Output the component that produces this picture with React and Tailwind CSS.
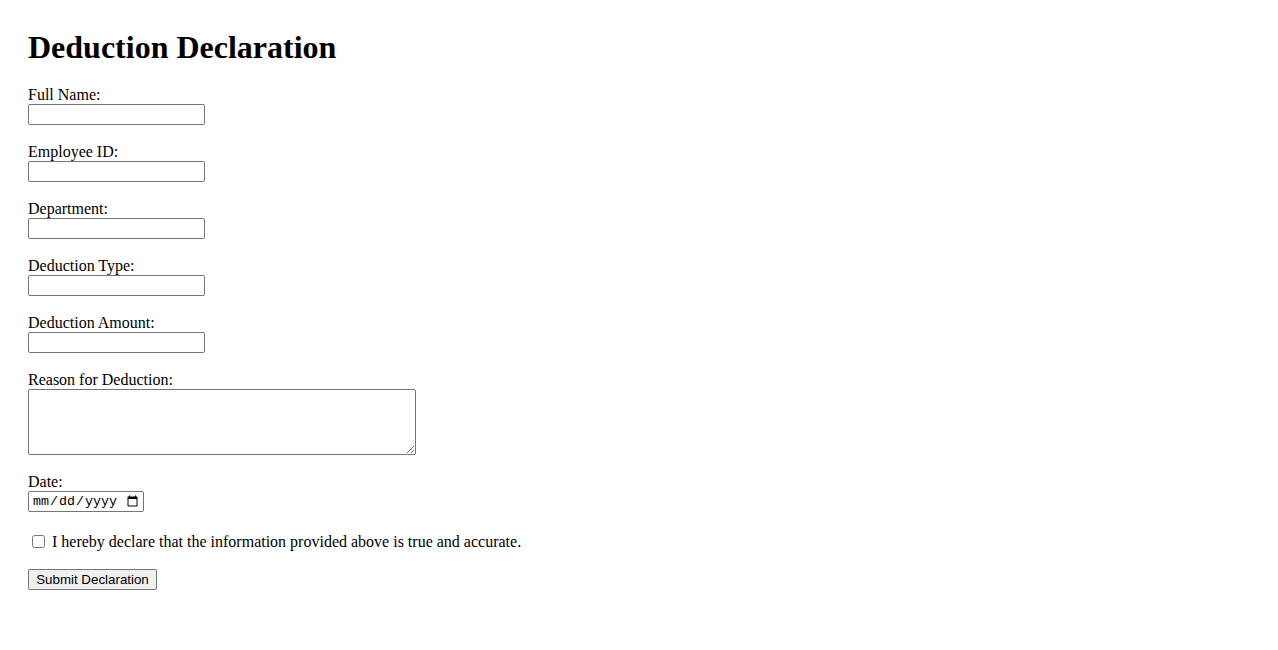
import React, { useState } from "react";

const fields = [
  { id: "fullName", label: "Full Name:" },
  { id: "employeeId", label: "Employee ID:" },
  { id: "department", label: "Department:" },
  { id: "deductionType", label: "Deduction Type:" },
  { id: "deductionAmount", label: "Deduction Amount:" },
];

const App = () => {
  const [agreed, setAgreed] = useState(false);

  return (
    <div className="min-h-screen bg-white px-[28px] pt-[29px] text-black font-['Liberation_Serif','Times_New_Roman',serif]">
      <h1 className="text-[32px] font-bold leading-[37px] mb-[20px]">
        Deduction Declaration
      </h1>

      <form onSubmit={(e) => e.preventDefault()}>
        {fields.map((f) => (
          <div key={f.id} className="mb-[18px]">
            <label htmlFor={f.id} className="block text-[16px] leading-[18px]">
              {f.label}
            </label>
            <input
              id={f.id}
              type="text"
              className="block w-[177px] h-[21px] px-[2px] border border-[#767676] rounded-[2px] bg-white text-[13.33px] font-['Liberation_Sans',Arial,sans-serif] outline-none"
            />
          </div>
        ))}

        {/* Reason */}
        <div className="mb-[18px]">
          <label htmlFor="reason" className="block text-[16px] leading-[18px]">
            Reason for Deduction:
          </label>
          <textarea
            id="reason"
            className="block w-[388px] h-[66px] px-[2px] border border-[#767676] rounded-[2px] bg-white text-[13.33px] font-['Liberation_Mono',monospace] outline-none resize"
          />
        </div>

        {/* Date */}
        <div>
          <label htmlFor="date" className="block text-[16px] leading-[18px]">
            Date:
          </label>
          <input
            id="date"
            type="date"
            className="block w-[116px] h-[21px] pl-[3px] pr-[2px] border border-[#767676] rounded-[2px] bg-white text-[13.33px] font-['Liberation_Mono',monospace] outline-none"
          />
        </div>

        <div className="flex items-center h-[19px] mt-[20px] text-[16px]">
          <input
            id="agree"
            type="checkbox"
            checked={agreed}
            onChange={() => setAgreed(!agreed)}
            className="w-[13px] h-[13px] ml-[4px] mr-[7px]"
          />
          <label htmlFor="agree" className="leading-[18px]">
            I hereby declare that the information provided above is true and accurate.
          </label>
        </div>

        <button
          type="submit"
          className="block mt-[18px] w-[129px] h-[21px] border border-[#767676] rounded-[2px] bg-[#efefef] text-[13.33px] leading-[15px] font-['Liberation_Sans',Arial,sans-serif] text-black"
        >
          Submit Declaration
        </button>
      </form>
    </div>
  );
};

export default App;
